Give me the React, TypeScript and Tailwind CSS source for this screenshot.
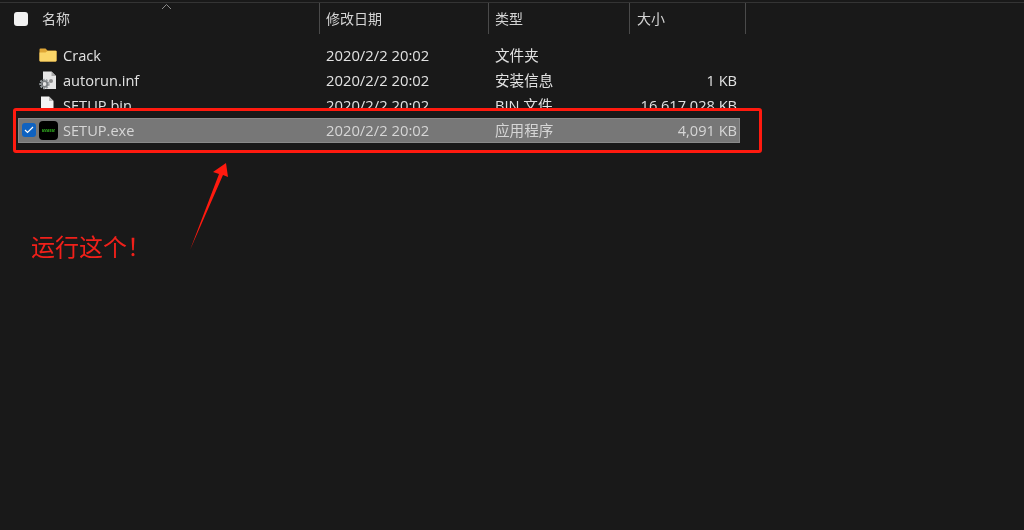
const font = { fontFamily: '"Open Sans", "Noto Sans CJK SC", sans-serif' };

type FileRow = {
  name: string;
  date: string;
  type: string;
  size: string;
  icon: React.ReactNode;
};

function FolderIcon() {
  return (
    <svg width="18" height="15" viewBox="0 0 18 15">
      <path d="M0.500 1.500a1 1 0 0 1 1-1h5l2 2h8a1 1 0 0 1 1 1v9a1 1 0 0 1-1 1h-15a1 1 0 0 1-1-1z" fill="#dfa636" />
      <path d="M0.500 4.500h6l2-1.500h9v9.500a1 1 0 0 1-1 1h-15a1 1 0 0 1-1-1z" fill="#fbd568" />
    </svg>
  );
}

function PageIcon() {
  return (
    <svg width="16" height="19" viewBox="0 0 16 19">
      <path d="M2 0.500h8l4.500 4.500v13.500h-12.500z" fill="#f4f4f4" />
      <path d="M10 0.500v4.500h4.500z" fill="#b9b9b9" />
    </svg>
  );
}

function InfIcon() {
  return (
    <svg width="18" height="19" viewBox="0 0 18 19">
      <path d="M4 0.500h8.500l4.500 4.500v13h-13z" fill="#e6e6e6" />
      <path d="M12.500 0.500v4.500h4.500z" fill="#a9a9a9" />
      <circle cx="12" cy="10" r="2" fill="#8f8f8f" />
      <circle cx="5.500" cy="13" r="4" fill="none" stroke="#9aa0a3" strokeWidth="2.400" strokeDasharray="1.800 1" />
      <circle cx="5.500" cy="13" r="2.800" fill="none" stroke="#7c8184" strokeWidth="1.800" />
    </svg>
  );
}

function ExeIcon() {
  return (
    <svg width="19" height="19" viewBox="0 0 19 19">
      <rect width="19" height="19" rx="4" fill="#000000" />
      <path d="M3 8.500h13" stroke="#1c7a14" strokeWidth="1" strokeDasharray="1.500 .5" />
      <path d="M3 10h13" stroke="#2f9e1e" strokeWidth="1.500" strokeDasharray="2 .5" />
    </svg>
  );
}

const rows: FileRow[] = [
  { name: "Crack", date: "2020/2/2 20:02", type: "文件夹", size: "", icon: <FolderIcon /> },
  { name: "autorun.inf", date: "2020/2/2 20:02", type: "安装信息", size: "1 KB", icon: <InfIcon /> },
  { name: "SETUP.bin", date: "2020/2/2 20:02", type: "BIN 文件", size: "16,617,028 KB", icon: <PageIcon /> },
];

function Row({ row }: { row: FileRow }) {
  return (
    <div className="ml-[18px] flex h-[25px] w-[722px] items-center text-[14.6px] text-[#e2e2e2]">
      <div className="flex w-[308px] items-center">
        <div className="ml-[21px] flex w-[24px] justify-start">{row.icon}</div>
        <span>{row.name}</span>
      </div>
      <span className="w-[169px] text-[14.8px]">{row.date}</span>
      <span className="w-[141px]">{row.type}</span>
      <span className="w-[101px] text-right">{row.size}</span>
    </div>
  );
}

export default function App() {
  return (
    <div className="relative h-[530px] w-[1024px] overflow-hidden bg-[#191919] blur-[0.35px]" style={font}>
      <div className="h-[3px] border-b border-[#343434]" />

      {/* column header */}
      <div className="flex h-[31px] items-center text-[14px] text-[#d4d4d4]">
        <div className="flex h-full w-[320px] items-center border-r border-[#4a4a4a] pl-[14px]">
          <div className="h-[14px] w-[14px] rounded-[3px] bg-[#f2f2f2]" />
          <span className="ml-[14px]">名称</span>
        </div>
        <div className="flex h-full w-[169px] items-center border-r border-[#4a4a4a] pl-[6px]">修改日期</div>
        <div className="flex h-full w-[141px] items-center border-r border-[#4a4a4a] pl-[6px]">类型</div>
        <div className="flex h-full w-[116px] items-center border-r border-[#4a4a4a] pl-[7px]">大小</div>
      </div>

      {/* sort arrow */}
      <svg className="absolute left-[161px] top-[3px]" width="11" height="7" viewBox="0 0 11 7">
        <path d="M1 6l4.500-4.500 4.500 4.500" fill="none" stroke="#8a8a8a" strokeWidth="1" />
      </svg>

      <div className="mt-[9px]">
        {rows.map((row) => (
          <Row key={row.name} row={row} />
        ))}
      </div>

      {/* red highlight box drawn on top of the list */}
      <div className="absolute left-[13px] top-[108px] h-[45px] w-[749px] rounded-[3px] border-[3px] border-[#ff1a0f] bg-[#191919]" />

      {/* selected row */}
      <div className="absolute left-[18px] top-[118px] flex h-[25px] w-[722px] items-center border border-[#8a8a8a] bg-[#777777] text-[14.6px] text-[#d6d6d6]">
        <div className="flex w-[307px] items-center">
          <div className="ml-[3px] flex h-[14px] w-[14px] items-center justify-center rounded-[3px] bg-[#0f62c0]">
            <svg width="10" height="8" viewBox="0 0 10 8">
              <path d="M1 4l2.500 2.500 5.500-5.500" fill="none" stroke="#ffffff" strokeWidth="1.200" />
            </svg>
          </div>
          <div className="ml-[3px] mr-[5px]">
            <ExeIcon />
          </div>
          <span>SETUP.exe</span>
        </div>
        <span className="w-[169px] text-[14.8px]">2020/2/2 20:02</span>
        <span className="w-[141px]">应用程序</span>
        <span className="w-[101px] text-right">4,091 KB</span>
      </div>

      {/* annotation */}
      <svg className="absolute left-[185px] top-[158px]" width="50" height="96" viewBox="185 158 50 96">
        <polygon points="190,250 219,174 213,172 226,163 228,177 223,175" fill="#ff1a0f" />
      </svg>
      <span className="absolute left-[31px] top-[230px] text-[24px] leading-[34px] text-[#f0201a]">运行这个！</span>
    </div>
  );
}
